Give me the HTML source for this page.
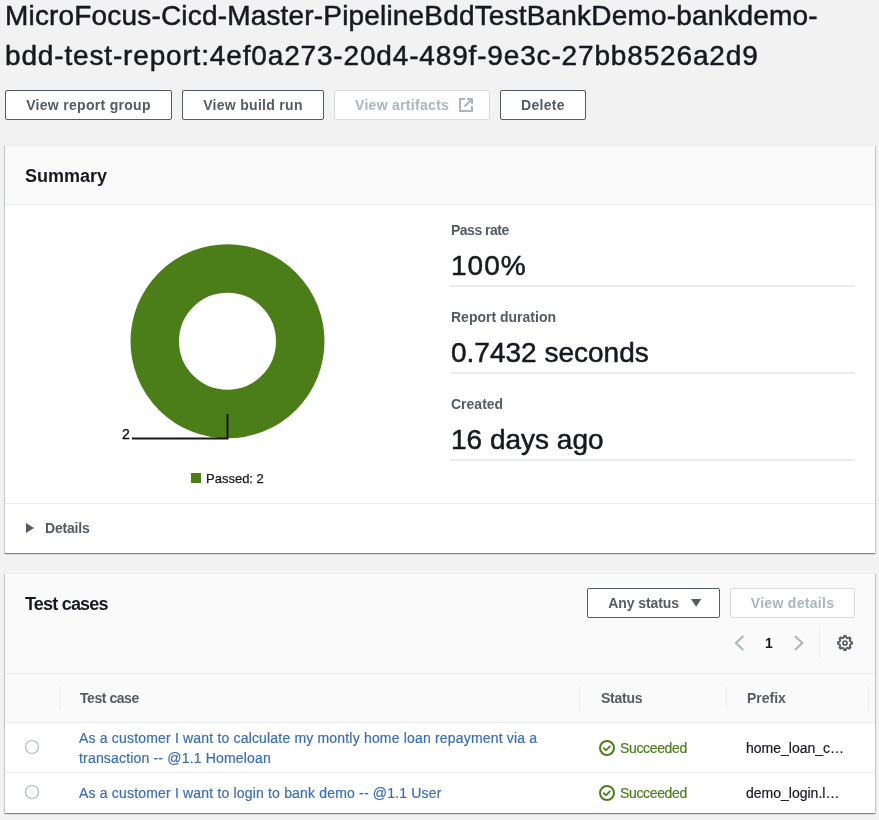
<!DOCTYPE html>
<html><head><meta charset="utf-8">
<style>
*{box-sizing:border-box;margin:0;padding:0}
html,body{width:879px;height:820px;overflow:hidden;background:#f2f2f2;font-family:"Liberation Sans",sans-serif;color:#16191f}
.a{position:absolute;white-space:nowrap;will-change:transform}
.title{font-size:28px;line-height:40px;left:5px;top:-4px;color:#16191f;-webkit-text-stroke:0.5px #16191f}
.btn{position:absolute;will-change:transform;height:30px;border:1px solid #545b64;border-radius:2px;background:#fff;color:#545b64;font-weight:700;font-size:14px;line-height:28px;text-align:center;letter-spacing:0.3px}
.btn.dis{border-color:#d5dbdb;color:#aab7b8}
.panel{position:absolute;left:5px;width:870px;background:#fff;border-top:1px solid #eaeded;box-shadow:0 1px 1px 0 rgba(0,28,36,.3),1px 1px 1px 0 rgba(0,28,36,.15),-1px 1px 1px 0 rgba(0,28,36,.15)}
.bg{position:absolute;background:#fafafa}
.line{position:absolute;background:#eaeded}
.h2{font-size:18px;font-weight:700;color:#16191f}
.lbl{font-size:14px;font-weight:700;color:#545b64}
.val{font-size:28px;color:#16191f;-webkit-text-stroke:0.5px #16191f}
.hr{position:absolute;left:450px;width:405px;height:2px;background:#eaeded}
.link{font-size:14px;color:#3b6db5;letter-spacing:0.18px;-webkit-text-stroke:0.2px #3b6db5}
.th{font-size:14px;font-weight:700;color:#545b64}
.td{font-size:14px;color:#16191f;-webkit-text-stroke:0.2px #16191f}
.ok{font-size:14px;color:#4b7d19;-webkit-text-stroke:0.2px #4b7d19}
</style></head><body>
<div class="a title"><span style="letter-spacing:0.176px">MicroFocus-Cicd-Master-PipelineBddTestBankDemo-bankdemo-</span><br><span style="letter-spacing:0.84px">bdd-test-report:4ef0a273-20d4-489f-9e3c-27bb8526a2d9</span></div>

<div class="btn" style="left:5px;top:90px;width:167px">View report group</div>
<div class="btn" style="left:182px;top:90px;width:142px">View build run</div>
<div class="btn dis" style="left:334px;top:90px;width:156px;text-align:left;padding-left:20px">View artifacts</div>
<svg class="a" style="left:459px;top:98px" width="14" height="14" viewBox="0 0 14 14"><path d="M6 1H1v12h12V8M8 1h5v5M13 1 5.5 8.5" fill="none" stroke="#aab7b8" stroke-width="2"/></svg>
<div class="btn" style="left:500px;top:90px;width:86px">Delete</div>

<!-- Summary panel -->
<div class="panel" style="top:145px;height:408px"></div>
<div class="bg" style="left:5px;top:146px;width:870px;height:58px"></div>
<div class="line" style="left:5px;top:204px;width:870px;height:1px"></div>
<div class="a h2" style="left:25px;top:166px">Summary</div>
<svg class="a" style="left:0;top:0" width="879" height="820">
  <circle cx="227.5" cy="341.3" r="72.75" fill="none" stroke="#4b7d19" stroke-width="48.5"/>
  <polyline points="227.5,414 227.5,438.5 132,438.5" fill="none" stroke="#16191f" stroke-width="2"/>
  <rect x="191" y="473" width="10" height="10" fill="#4b7d19"/>
</svg>
<div class="a" style="left:122px;top:426px;font-size:14px;color:#000;-webkit-text-stroke:0.25px #000">2</div>
<div class="a" style="left:205.5px;top:471px;font-size:13px;-webkit-text-stroke:0.25px #16191f">Passed: 2</div>

<div class="a lbl" style="left:451px;top:222px;letter-spacing:-0.5px">Pass rate</div>
<div class="a val" style="left:451px;top:250px;letter-spacing:1px">100%</div>
<div class="hr" style="top:285px"></div>
<div class="a lbl" style="left:451px;top:309px">Report duration</div>
<div class="a val" style="left:451px;top:337px">0.7432 seconds</div>
<div class="hr" style="top:372px"></div>
<div class="a lbl" style="left:451px;top:396px">Created</div>
<div class="a val" style="left:451px;top:424px">16 days ago</div>
<div class="hr" style="top:459px"></div>

<div class="line" style="left:5px;top:503px;width:870px;height:1px"></div>
<svg class="a" style="left:26px;top:523px" width="9" height="10" viewBox="0 0 9 10"><path d="M0 0L8 5L0 10Z" fill="#545b64"/></svg>
<div class="a lbl" style="left:44.5px;top:520px;letter-spacing:-0.2px">Details</div>

<!-- Test cases panel -->
<div class="panel" style="top:573px;height:240px"></div>
<div class="bg" style="left:5px;top:574px;width:870px;height:148px"></div>
<div class="line" style="left:5px;top:673px;width:870px;height:1px"></div>
<div class="line" style="left:5px;top:722px;width:870px;height:1px"></div>
<div class="line" style="left:5px;top:772px;width:870px;height:1px"></div>
<div class="a h2" style="left:25px;top:594px;letter-spacing:-0.8px">Test cases</div>

<div class="btn" style="left:587px;top:588px;width:133px;text-align:left;padding-left:20.3px;letter-spacing:-0.1px">Any status</div>
<svg class="a" style="left:691px;top:599px" width="11" height="8" viewBox="0 0 11 8"><path d="M0 0h10.3L5.15 7.8Z" fill="#545b64"/></svg>
<div class="btn dis" style="left:730px;top:588px;width:125px">View details</div>

<svg class="a" style="left:0;top:0" width="879" height="820">
  <polyline points="743.3,636 736,643 743.3,650" fill="none" stroke="#aab7b8" stroke-width="2"/>
  <polyline points="795,636 802.3,643 795,650" fill="none" stroke="#aab7b8" stroke-width="2"/>
  <rect x="819" y="628" width="1" height="30" fill="#eaeded"/>
  <g transform="translate(837,635)">
    <path d="M6.70,2.60 L7.15,1.00 L8.85,1.00 L9.30,2.60 L10.90,3.26 L12.35,2.45 L13.55,3.65 L12.74,5.10 L13.40,6.70 L15.00,7.15 L15.00,8.85 L13.40,9.30 L12.74,10.90 L13.55,12.35 L12.35,13.55 L10.90,12.74 L9.30,13.40 L8.85,15.00 L7.15,15.00 L6.70,13.40 L5.10,12.74 L3.65,13.55 L2.45,12.35 L3.26,10.90 L2.60,9.30 L1.00,8.85 L1.00,7.15 L2.60,6.70 L3.26,5.10 L2.45,3.65 L3.65,2.45 L5.10,3.26Z" fill="none" stroke="#545b64" stroke-width="1.9" stroke-linejoin="round"/>
    <circle cx="8" cy="8" r="2" fill="none" stroke="#545b64" stroke-width="1.7"/>
  </g>
  <rect x="59.5" y="686" width="1" height="24" fill="#eaeded"/>
  <rect x="579" y="686" width="1" height="24" fill="#eaeded"/>
  <rect x="726" y="686" width="1" height="24" fill="#eaeded"/>
  <rect x="868" y="686" width="1" height="24" fill="#eaeded"/>
  <circle cx="32" cy="747" r="6.5" fill="#fff" stroke="#aab7b8" stroke-width="1.2"/>
  <circle cx="32" cy="792" r="6.5" fill="#fff" stroke="#aab7b8" stroke-width="1.2"/>
  <g transform="translate(599,740)">
    <circle cx="8" cy="8" r="7" fill="none" stroke="#4b7d19" stroke-width="2"/>
    <polyline points="4.2,7.7 7,10.3 11.3,5.8" fill="none" stroke="#4b7d19" stroke-width="1.8"/>
  </g>
  <g transform="translate(599,785)">
    <circle cx="8" cy="8" r="7" fill="none" stroke="#4b7d19" stroke-width="2"/>
    <polyline points="4.2,7.7 7,10.3 11.3,5.8" fill="none" stroke="#4b7d19" stroke-width="1.8"/>
  </g>
</svg>
<div class="a" style="left:765px;top:635px;font-size:14px;font-weight:700">1</div>

<div class="a th" style="left:80px;top:690px;letter-spacing:-0.45px">Test case</div>
<div class="a th" style="left:600.5px;top:690px;letter-spacing:-0.25px">Status</div>
<div class="a th" style="left:747px;top:690px">Prefix</div>

<div class="a link" style="left:79px;top:729px;line-height:19.5px">As a customer I want to calculate my montly home loan repayment via a<br>transaction -- @1.1 Homeloan</div>
<div class="a ok" style="left:620px;top:740px;letter-spacing:-0.35px">Succeeded</div>
<div class="a td" style="left:746px;top:740px">home_loan_c…</div>

<div class="a link" style="left:79px;top:785px">As a customer I want to login to bank demo -- @1.1 User</div>
<div class="a ok" style="left:620px;top:785px;letter-spacing:-0.35px">Succeeded</div>
<div class="a td" style="left:746px;top:785px">demo_login.l…</div>
</body></html>
